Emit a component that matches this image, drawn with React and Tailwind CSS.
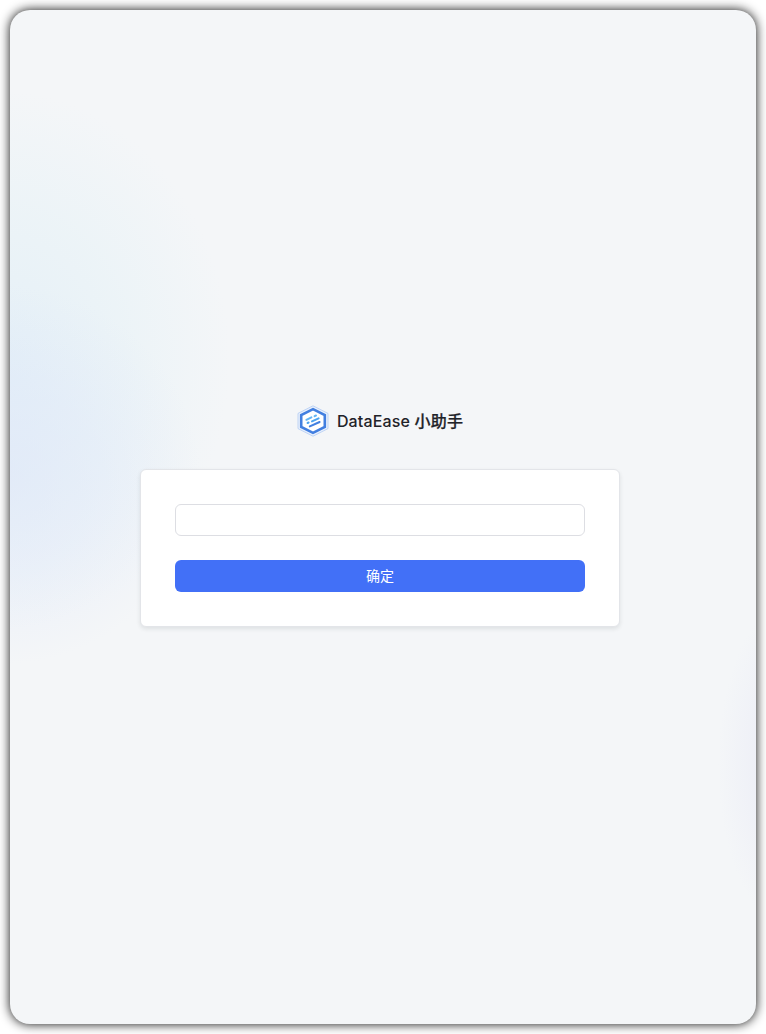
function Logo() {
  return (
    <svg className="h-8 w-8 shrink-0" viewBox="0 0 32 32" fill="none">
      <path d="M16 0.8 31 8.4V23.6L16 31.2 1 23.6V8.4Z" fill="#eaf1fc" stroke="#a9c6f2" strokeWidth="0.7" />
      <path d="M16 4.2 27.8 10.1V21.9L16 27.8 4.2 21.9V10.1Z" fill="#fff" stroke="#427fe0" strokeWidth="2.6" />
      <g strokeWidth="2" strokeLinecap="round">
        <path d="M9.4 14.8 14.4 12.4M17.6 11.2 19 10.5" stroke="#62b5f5" />
        <path d="M10.6 18 11.6 17.5M15 16.4 21.6 13.4" stroke="#4da4f0" />
        <path d="M12.8 21.4 22.6 17" stroke="#427fe0" />
      </g>
    </svg>
  );
}

export default function App() {
  return (
    <div className="h-[1034px] w-[766px] overflow-hidden bg-white p-[10px] font-['Inter','Noto_Sans_CJK_SC',sans-serif]">
      <main className="flex h-full flex-col items-center rounded-[20px] bg-[#f4f6f8] bg-[radial-gradient(ellipse_200px_190px_at_-10px_465px,rgba(218,227,249,0.52),rgba(218,228,250,0.32)_50%,transparent),radial-gradient(ellipse_230px_270px_at_-10px_350px,rgba(214,234,246,0.5),rgba(218,238,245,0.3)_55%,transparent),radial-gradient(ellipse_75px_165px_at_783px_755px,rgba(224,225,244,0.55),transparent)] pt-[395px] pr-[6px] shadow-[0_0_11px_rgba(0,0,0,0.95)]">
        <header className="flex h-8 items-center gap-2">
          <Logo />
          <h1 className="text-base font-medium tracking-[0.16px] whitespace-nowrap text-[#1f2329]">
            DataEase <span className="[-webkit-text-stroke:0.25px_#1f2329]">小助手</span>
          </h1>
        </header>
        <form className="mt-8 flex h-[158px] w-[480px] flex-col gap-6 rounded-md border border-[#e3e5e9] bg-white px-[34px] pt-[34px] shadow-[0_2px_4px_rgba(31,35,41,0.1)]" onSubmit={(e) => e.preventDefault()}>
          <input type="password" className="h-8 w-full rounded-md border border-[#dddee3] bg-white px-3 text-sm outline-none" />
          <button className="h-8 w-full rounded-md bg-[#4270f7] text-sm text-white">确定</button>
        </form>
      </main>
    </div>
  );
}
